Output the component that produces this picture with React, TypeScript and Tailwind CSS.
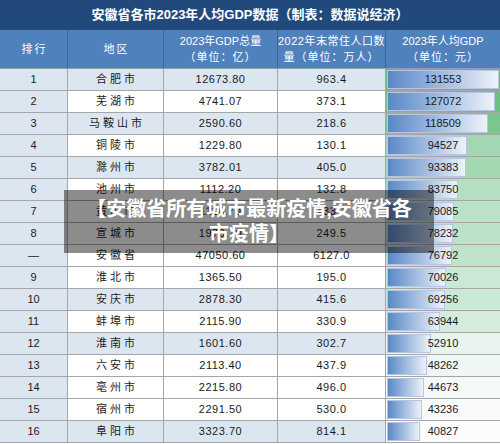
const ROWS = [
  { rank: "1", city: "合肥市", gdp: "12673.80", pop: "963.4", per: 131553, shaded: true },
  { rank: "2", city: "芜湖市", gdp: "4741.07", pop: "373.1", per: 127072, shaded: false },
  { rank: "3", city: "马鞍山市", gdp: "2590.60", pop: "218.6", per: 118509, shaded: true },
  { rank: "4", city: "铜陵市", gdp: "1229.80", pop: "130.1", per: 94527, shaded: false },
  { rank: "5", city: "滁州市", gdp: "3782.01", pop: "405.0", per: 93383, shaded: true },
  { rank: "6", city: "池州市", gdp: "1112.20", pop: "132.8", per: 83750, shaded: false },
  { rank: "7", city: "黄山市", gdp: "1116.70", pop: "133.1", per: 79085, shaded: false },
  { rank: "8", city: "宣城市", gdp: "1970.70", pop: "249.5", per: 78232, shaded: false },
  { rank: "—", city: "安徽省", gdp: "47050.60", pop: "6127.0", per: 76792, shaded: false },
  { rank: "9", city: "淮北市", gdp: "1365.50", pop: "195.0", per: 70026, shaded: false },
  { rank: "10", city: "安庆市", gdp: "2878.30", pop: "415.6", per: 69256, shaded: true },
  { rank: "11", city: "蚌埠市", gdp: "2115.90", pop: "330.9", per: 63944, shaded: false },
  { rank: "12", city: "淮南市", gdp: "1601.60", pop: "302.7", per: 52910, shaded: true },
  { rank: "13", city: "六安市", gdp: "2113.40", pop: "437.9", per: 48262, shaded: false },
  { rank: "14", city: "亳州市", gdp: "2215.80", pop: "496.0", per: 44673, shaded: false },
  { rank: "15", city: "宿州市", gdp: "2291.50", pop: "530.0", per: 43236, shaded: false },
  { rank: "16", city: "阜阳市", gdp: "3323.70", pop: "814.1", per: 40827, shaded: true },
];

const MAX = 131553;
const MIN = 40827;

// excel style 2-colour scale: white (low) -> green (high)
function scaleColor(v: number) {
  const t = (v - MIN) / (MAX - MIN);
  const lo = [252, 252, 255];
  const hi = [99, 190, 123];
  const c = lo.map((l, i) => Math.round(l + (hi[i] - l) * t));
  return `rgb(${c[0]}, ${c[1]}, ${c[2]})`;
}

const cellFont = { fontFamily: '"Liberation Sans", "Noto Sans CJK SC", sans-serif' };

export default function App() {
  return (
    <div
      className="relative h-[444px] w-[500px] overflow-hidden bg-white text-[11px] text-[#1a1a1a]"
      style={cellFont}
    >
      {/* Title */}
      <div className="flex h-[30px] items-center justify-center bg-[#21497c] text-[13px] font-bold text-white">
        安徽省各市2023年人均GDP数据（制表：数据说经济）
      </div>

      {/* Header */}
      <div className="grid h-[39px] grid-cols-[68px_96px_114px_108px_114px] border-b border-[#8e9cb0] bg-[#4f81bd] text-[11px] leading-[16px] text-white">
        <div className="flex items-center justify-center border-r border-[#3d6596] pl-[2px] tracking-[2px]">排行</div>
        <div className="flex items-center justify-center border-r border-[#3d6596] pl-[2px] tracking-[2px]">地区</div>
        <div className="flex flex-col items-center justify-center border-r border-[#3d6596]">
          <span>2023年GDP总量</span>
          <span className="tracking-[1px]">（单位：亿）</span>
        </div>
        <div className="flex flex-col items-center justify-center border-r border-[#3d6596]">
          <span className="tracking-[0.5px]">2022年末常住人口数</span>
          <span className="tracking-[1px]">量（单位：万人）</span>
        </div>
        <div className="flex flex-col items-center justify-center">
          <span>2023年人均GDP</span>
          <span className="tracking-[1px]">（单位：元）</span>
        </div>
      </div>

      {/* Rows */}
      {ROWS.map((r) => {
        const bg = r.shaded ? "bg-[#dce6f1]" : "bg-white";
        const pct = (r.per / MAX) * 100;
        return (
          <div
            key={r.rank}
            className="grid h-[22px] grid-cols-[68px_96px_114px_108px_114px] border-b border-[#a6a6a6]"
          >
            <div className="flex items-center justify-center border-r border-[#a6a6a6] bg-[#dce6f1]">{r.rank}</div>
            <div className={`flex items-center justify-center border-r border-[#a6a6a6] pl-[3px] tracking-[3px] ${bg}`}>
              {r.city}
            </div>
            <div className={`flex items-center justify-center border-r border-[#a6a6a6] tracking-[0.5px] ${bg}`}>
              {r.gdp}
            </div>
            <div className={`flex items-center justify-center border-r border-[#a6a6a6] tracking-[0.5px] ${bg}`}>
              {r.pop}
            </div>
            <div className="relative flex items-center justify-center" style={{ backgroundColor: scaleColor(r.per) }}>
              <div
                className="absolute inset-y-px left-px border border-[#b4c6e4] bg-gradient-to-r from-[#5a88c6] to-[#eef2f9]"
                style={{ width: `calc(${pct}% - 2px)` }}
              />
              <span className="relative">{r.per}</span>
            </div>
          </div>
        );
      })}

      {/* Watermark banner */}
      <div className="absolute left-[64px] top-[190px] flex h-[63px] w-[370px] flex-col items-center justify-center bg-black/45 text-[20px] font-bold leading-[25px] text-white">
        <span>【安徽省所有城市最新疫情,安徽省各</span>
        <span>市疫情】</span>
      </div>
    </div>
  );
}
